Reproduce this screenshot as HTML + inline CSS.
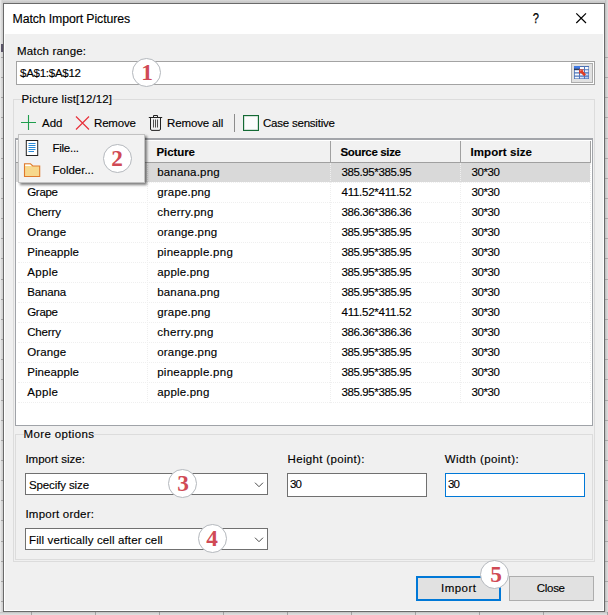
<!DOCTYPE html>
<html lang="en">
<head>
<meta charset="utf-8">
<title>Match Import Pictures</title>
<style>
html,body{margin:0;padding:0;}
body{width:608px;height:615px;position:relative;overflow:hidden;background:#e3e3e3;font-family:"Liberation Sans",sans-serif;font-size:12px;color:#000;}
.abs,.t{position:absolute;}
.t{white-space:pre;line-height:14px;height:14px;font-size:12px;color:#000;-webkit-text-stroke:0.14px #000;}
.lg{background:#f0f0f0;}
.z{z-index:6;}
.pz{z-index:5;}
#win{left:3px;top:3px;width:600px;height:607px;border:1px solid #6a6a6a;background:#f0f0f0;box-shadow:inset 0 0 0 1px #fff;}
#title{left:4px;top:4px;width:600px;height:30px;background:#fff;}
.box{background:#fff;border:1px solid #707070;box-sizing:border-box;}
.grp{border:1px solid #dcdcdc;box-sizing:border-box;}
.btn{background:#e1e1e1;border:1px solid #adadad;box-sizing:border-box;}
.circ{width:29px;height:29px;border-radius:50%;background:#fff;border:1px solid #b4b8bd;box-sizing:border-box;text-align:center;
 font-family:"Liberation Serif",serif;font-weight:bold;font-size:24px;line-height:26px;color:#d04a55;}
.circ span{display:inline-block;position:relative;transform:scale(.97,1);transform-origin:50% 78%;}
.hl{height:1px;border-top:1px dotted #efefef;box-sizing:border-box;}
.vl{width:1px;border-left:1px dotted #efefef;box-sizing:border-box;}
</style>
</head>
<body>
<div class="abs" style="left:0;top:0;width:608px;height:3px;background:linear-gradient(#dadada,#cdcdcd 50%,#c6c6c6);"></div>
<div class="abs" style="left:0;top:0;width:3px;height:615px;background:linear-gradient(90deg,#f0f0f0,#dcdcdc 40%,#cccccc);"></div>
<div class="abs" style="left:1px;top:56.8px;width:3px;height:560px;background:repeating-linear-gradient(180deg,rgba(120,120,120,.55) 0,rgba(120,120,120,.55) 1px,transparent 1px,transparent 20.15px);"></div>
<div class="abs" style="left:1px;top:44px;width:2px;height:8px;background:#5a5468;"></div>
<div class="abs" style="left:605px;top:0;width:3px;height:615px;background:linear-gradient(90deg,#bcbcbc,#d0d0d0 50%,#dedede);"></div>
<div class="abs" style="left:605px;top:56.8px;width:3px;height:560px;background:repeating-linear-gradient(180deg,rgba(120,120,120,.45) 0,rgba(120,120,120,.45) 1px,transparent 1px,transparent 20.15px);"></div>
<div class="abs" style="left:0;top:612px;width:608px;height:3px;background:linear-gradient(#c0c0c0,#d6d6d6 50%,#e2e2e2);"></div>
<div class="abs" style="left:31px;top:612px;width:577px;height:3px;background:repeating-linear-gradient(90deg,rgba(110,110,110,.5) 0,rgba(110,110,110,.5) 1px,transparent 1px,transparent 64px);"></div>
<div class="abs" id="win"></div>
<div class="abs" id="title"></div>

<!-- title buttons -->
<svg class="abs" style="left:570px;top:8px" width="24" height="20" viewBox="0 0 24 20"><path d="M6.3 5.3 L16 15 M16 5.3 L6.3 15" stroke="#000" stroke-width="1.2" fill="none"/></svg>
<span class="t" style="left:531.6px;top:11.2px;font-size:14px;-webkit-text-stroke:0.25px #000;transform:scaleX(.8);">?</span>

<!-- range input -->
<div class="abs box" style="left:16px;top:61px;width:579px;height:24px;border-color:#a3a3a3;"></div>
<div class="abs btn" style="left:571px;top:63px;width:22px;height:20px;"></div>
<svg class="abs" style="left:574px;top:66px" width="16" height="14" viewBox="0 0 16 14">
 <defs><linearGradient id="cg" x1="0" y1="0" x2="1" y2="1"><stop offset="0" stop-color="#ffffff"/><stop offset="0.55" stop-color="#f4f8ff"/><stop offset="1" stop-color="#9dbcf0"/></linearGradient></defs>
 <rect x="0" y="0" width="15" height="13" fill="#4c71b3"/>
 <rect x="0.8" y="1" width="13.6" height="11.4" fill="url(#cg)"/>
 <path d="M0 3.7 H15 M0 6.9 H15 M0 10.1 H15" stroke="#4f76ba" stroke-width="1.1" fill="none"/>
 <path d="M5.5 0 V13 M10.5 0 V13" stroke="#4f76ba" stroke-width="1" fill="none"/>
 <rect x="0" y="0" width="6" height="2.8" fill="#3f7ae6"/>
 <rect x="0" y="2.6" width="5.6" height="1.2" fill="#1a2948"/>
 <path d="M5.1 3.2 L10 3.4 L8.6 4.8 L12 8.2 L10.2 10.2 L6.7 6.8 L5.3 8.2 Z" fill="#e03c22"/>
 <path d="M6 4 L8 4 L6 5.8 Z" fill="#f0806a"/>
</svg>

<!-- group 1 -->
<div class="abs grp" style="left:13px;top:99px;width:582px;height:463px;"></div>

<!-- toolbar icons -->
<svg class="abs" style="left:20px;top:114px" width="18" height="18" viewBox="0 0 18 18"><path d="M1 8.5 H16 M8.5 1 V16" stroke="#1f9e4d" stroke-width="1.1" fill="none"/></svg>
<svg class="abs" style="left:74px;top:115px" width="18" height="18" viewBox="0 0 18 18"><path d="M2 1.5 L15 14.5 M15 1.5 L2 14.5" stroke="#e8323c" stroke-width="1.2" fill="none"/></svg>
<svg class="abs" style="left:147px;top:114px" width="17" height="18" viewBox="0 0 17 18">
 <path d="M6.5 3.5 V1.5 H10.5 V3.5" stroke="#222" stroke-width="1" fill="none"/>
 <path d="M1.8 3.5 H15.2" stroke="#222" stroke-width="1" fill="none"/>
 <path d="M3.5 3.5 V15 Q3.6 16.4 5 16.4 H12 Q13.4 16.4 13.5 15 V3.5" stroke="#222" stroke-width="1" fill="none"/>
 <path d="M6.5 5.5 V13.5 M8.5 5.5 V13.5 M10.5 5.5 V13.5" stroke="#333" stroke-width="0.85" fill="none"/>
</svg>
<div class="abs" style="left:234px;top:114px;width:1px;height:18px;background:#8c8c8c;"></div>
<div class="abs" style="left:243px;top:115px;width:16px;height:16px;box-sizing:border-box;border:1px solid #146a34;background:#fcfcfc;box-shadow:inset 0 0 0 0.5px rgba(20,106,52,.35);"></div>

<!-- table -->
<div class="abs" style="left:15px;top:138px;width:578px;height:288px;box-sizing:border-box;border:1px solid #a0a3a8;border-top:2px solid #a3a5aa;background:#fff;"></div>
<div class="abs" style="left:16px;top:141px;width:575px;height:22px;background:#f1f1f1;border-bottom:1px solid #a0a0a0;box-sizing:border-box;"></div>
<div class="abs" style="left:330px;top:141px;width:1px;height:22px;background:#a0a0a0;"></div>
<div class="abs" style="left:460px;top:141px;width:1px;height:22px;background:#a0a0a0;"></div>
<div class="abs" style="left:590px;top:141px;width:1px;height:22px;background:#a0a0a0;"></div>
<div class="abs" style="left:16px;top:163px;width:574px;height:19px;background:#d9d9d9;"></div>
<div class="abs hl" style="left:18px;top:182px;width:572px;"></div>
<div class="abs hl" style="left:18px;top:202px;width:572px;"></div>
<div class="abs hl" style="left:18px;top:222px;width:572px;"></div>
<div class="abs hl" style="left:18px;top:242px;width:572px;"></div>
<div class="abs hl" style="left:18px;top:262px;width:572px;"></div>
<div class="abs hl" style="left:18px;top:282px;width:572px;"></div>
<div class="abs hl" style="left:18px;top:302px;width:572px;"></div>
<div class="abs hl" style="left:18px;top:322px;width:572px;"></div>
<div class="abs hl" style="left:18px;top:342px;width:572px;"></div>
<div class="abs hl" style="left:18px;top:362px;width:572px;"></div>
<div class="abs hl" style="left:18px;top:382px;width:572px;"></div>
<div class="abs hl" style="left:18px;top:402px;width:572px;"></div>
<div class="abs vl" style="left:147px;top:163px;height:240px;"></div>
<div class="abs vl" style="left:330px;top:163px;height:240px;"></div>
<div class="abs vl" style="left:460px;top:163px;height:240px;"></div>
<div class="abs vl" style="left:590px;top:163px;height:240px;"></div>

<!-- popup -->
<div class="abs pz" style="left:18px;top:134px;width:126.5px;height:49px;box-sizing:border-box;background:#f2f2f2;border:1px solid #c2c2c2;box-shadow:2px 2px 2.5px rgba(0,0,0,.5);"></div>
<svg class="abs pz" style="left:25px;top:139px" width="16" height="18" viewBox="0 0 16 18">
 <rect x="1.3" y="1.5" width="11.4" height="15" fill="#fff" stroke="#222" stroke-width="1"/>
 <path d="M3.5 4.5 H10.5 M3.5 6.5 H10.5 M3.5 8.5 H10.5 M3.5 10.5 H10.5 M3.5 12.5 H9" stroke="#2b8ad6" stroke-width="1" fill="none"/>
</svg>
<svg class="abs pz" style="left:23px;top:162px" width="19" height="16" viewBox="0 0 19 16">
 <path d="M1.5 14.5 V1.9 H7.5 L9.8 4 H16.7 V14.5 Z" fill="#f7d88c" stroke="#e07a2c" stroke-width="1.1"/>
 <path d="M2.2 3.9 V2.6 H7.1 L8.6 3.9 Z" fill="#fff"/>
</svg>

<!-- group 2 -->
<div class="abs grp" style="left:15px;top:434px;width:578px;height:126px;"></div>
<div class="abs box" style="left:25px;top:473px;width:243px;height:22px;"></div>
<div class="abs box" style="left:25px;top:528px;width:243px;height:22px;"></div>
<svg class="abs" style="left:253px;top:479px" width="12" height="10" viewBox="0 0 12 10"><path d="M2 3.7 L6 7.7 L10 3.7" stroke="#404040" stroke-width="0.95" fill="none"/></svg>
<svg class="abs" style="left:253px;top:534px" width="12" height="10" viewBox="0 0 12 10"><path d="M2 3.7 L6 7.7 L10 3.7" stroke="#404040" stroke-width="0.95" fill="none"/></svg>
<div class="abs box" style="left:287px;top:473px;width:140px;height:24px;"></div>
<div class="abs box" style="left:445px;top:473px;width:140px;height:24px;border-color:#0078d7;"></div>

<!-- buttons -->
<div class="abs btn" style="left:416px;top:576px;width:85px;height:25px;border:2px solid #0078d7;"></div>
<div class="abs btn" style="left:509px;top:576px;width:85px;height:25px;"></div>

<span class="t" style="left:12.5px;top:12px;letter-spacing:-0.10px;font-size:12.3px;">Match Import Pictures</span>
<span class="t" style="left:17px;top:43.9px;letter-spacing:0.17px;font-size:11.5px;">Match range:</span>
<span class="t" style="left:20px;top:65.9px;letter-spacing:-0.26px;font-size:11.5px;">$A$1:$A$12</span>
<span class="t lg" style="left:21.5px;top:91.8px;letter-spacing:0.13px;font-size:11.5px;">Picture list[12/12]</span>
<span class="t" style="left:42px;top:115.9px;letter-spacing:0.02px;font-size:11.5px;">Add</span>
<span class="t" style="left:94px;top:115.9px;letter-spacing:-0.17px;font-size:11.5px;">Remove</span>
<span class="t" style="left:167px;top:115.9px;letter-spacing:-0.13px;font-size:11.5px;">Remove all</span>
<span class="t" style="left:263px;top:115.9px;letter-spacing:-0.22px;font-size:11.5px;">Case sensitive</span>
<span class="t z" style="left:52.5px;top:141.2px;letter-spacing:-0.27px;font-size:11.5px;">File...</span>
<span class="t z" style="left:52.5px;top:162.9px;letter-spacing:-0.01px;font-size:11.5px;">Folder...</span>
<span class="t" style="left:156.5px;top:145.2px;letter-spacing:-0.08px;font-weight:bold;font-size:11.5px;">Picture</span>
<span class="t" style="left:340.5px;top:145.2px;letter-spacing:-0.34px;font-weight:bold;font-size:11.5px;">Source size</span>
<span class="t" style="left:470.5px;top:145.2px;letter-spacing:0.08px;font-weight:bold;font-size:11.5px;">Import size</span>
<span class="t" style="left:27.2px;top:164.6px;letter-spacing:-0.13px;font-size:11.5px;">Banana</span>
<span class="t" style="left:157.2px;top:164.6px;letter-spacing:0.19px;font-size:11.5px;">banana.png</span>
<span class="t" style="left:341.5px;top:164.6px;letter-spacing:-0.39px;font-size:11.5px;">385.95*385.95</span>
<span class="t" style="left:471.4px;top:164.6px;letter-spacing:-0.37px;font-size:11.5px;">30*30</span>
<span class="t" style="left:27.2px;top:184.6px;letter-spacing:-0.29px;font-size:11.5px;">Grape</span>
<span class="t" style="left:157.2px;top:184.6px;letter-spacing:0.19px;font-size:11.5px;">grape.png</span>
<span class="t" style="left:341.5px;top:184.6px;letter-spacing:-0.25px;font-size:11.5px;">411.52*411.52</span>
<span class="t" style="left:471.4px;top:184.6px;letter-spacing:-0.37px;font-size:11.5px;">30*30</span>
<span class="t" style="left:27.2px;top:204.6px;letter-spacing:-0.16px;font-size:11.5px;">Cherry</span>
<span class="t" style="left:157.2px;top:204.6px;letter-spacing:0.31px;font-size:11.5px;">cherry.png</span>
<span class="t" style="left:341.5px;top:204.6px;letter-spacing:-0.39px;font-size:11.5px;">386.36*386.36</span>
<span class="t" style="left:471.4px;top:204.6px;letter-spacing:-0.37px;font-size:11.5px;">30*30</span>
<span class="t" style="left:27.2px;top:224.6px;letter-spacing:0.13px;font-size:11.5px;">Orange</span>
<span class="t" style="left:157.2px;top:224.6px;letter-spacing:0.20px;font-size:11.5px;">orange.png</span>
<span class="t" style="left:341.5px;top:224.6px;letter-spacing:-0.39px;font-size:11.5px;">385.95*385.95</span>
<span class="t" style="left:471.4px;top:224.6px;letter-spacing:-0.37px;font-size:11.5px;">30*30</span>
<span class="t" style="left:27.2px;top:244.6px;letter-spacing:0.08px;font-size:11.5px;">Pineapple</span>
<span class="t" style="left:157.2px;top:244.6px;letter-spacing:0.28px;font-size:11.5px;">pineapple.png</span>
<span class="t" style="left:341.5px;top:244.6px;letter-spacing:-0.39px;font-size:11.5px;">385.95*385.95</span>
<span class="t" style="left:471.4px;top:244.6px;letter-spacing:-0.37px;font-size:11.5px;">30*30</span>
<span class="t" style="left:27.2px;top:264.6px;letter-spacing:0.34px;font-size:11.5px;">Apple</span>
<span class="t" style="left:157.2px;top:264.6px;letter-spacing:0.20px;font-size:11.5px;">apple.png</span>
<span class="t" style="left:341.5px;top:264.6px;letter-spacing:-0.39px;font-size:11.5px;">385.95*385.95</span>
<span class="t" style="left:471.4px;top:264.6px;letter-spacing:-0.37px;font-size:11.5px;">30*30</span>
<span class="t" style="left:27.2px;top:284.6px;letter-spacing:-0.13px;font-size:11.5px;">Banana</span>
<span class="t" style="left:157.2px;top:284.6px;letter-spacing:0.19px;font-size:11.5px;">banana.png</span>
<span class="t" style="left:341.5px;top:284.6px;letter-spacing:-0.39px;font-size:11.5px;">385.95*385.95</span>
<span class="t" style="left:471.4px;top:284.6px;letter-spacing:-0.37px;font-size:11.5px;">30*30</span>
<span class="t" style="left:27.2px;top:304.6px;letter-spacing:-0.29px;font-size:11.5px;">Grape</span>
<span class="t" style="left:157.2px;top:304.6px;letter-spacing:0.19px;font-size:11.5px;">grape.png</span>
<span class="t" style="left:341.5px;top:304.6px;letter-spacing:-0.25px;font-size:11.5px;">411.52*411.52</span>
<span class="t" style="left:471.4px;top:304.6px;letter-spacing:-0.37px;font-size:11.5px;">30*30</span>
<span class="t" style="left:27.2px;top:324.6px;letter-spacing:-0.16px;font-size:11.5px;">Cherry</span>
<span class="t" style="left:157.2px;top:324.6px;letter-spacing:0.31px;font-size:11.5px;">cherry.png</span>
<span class="t" style="left:341.5px;top:324.6px;letter-spacing:-0.39px;font-size:11.5px;">386.36*386.36</span>
<span class="t" style="left:471.4px;top:324.6px;letter-spacing:-0.37px;font-size:11.5px;">30*30</span>
<span class="t" style="left:27.2px;top:344.6px;letter-spacing:0.13px;font-size:11.5px;">Orange</span>
<span class="t" style="left:157.2px;top:344.6px;letter-spacing:0.20px;font-size:11.5px;">orange.png</span>
<span class="t" style="left:341.5px;top:344.6px;letter-spacing:-0.39px;font-size:11.5px;">385.95*385.95</span>
<span class="t" style="left:471.4px;top:344.6px;letter-spacing:-0.37px;font-size:11.5px;">30*30</span>
<span class="t" style="left:27.2px;top:364.6px;letter-spacing:0.08px;font-size:11.5px;">Pineapple</span>
<span class="t" style="left:157.2px;top:364.6px;letter-spacing:0.28px;font-size:11.5px;">pineapple.png</span>
<span class="t" style="left:341.5px;top:364.6px;letter-spacing:-0.39px;font-size:11.5px;">385.95*385.95</span>
<span class="t" style="left:471.4px;top:364.6px;letter-spacing:-0.37px;font-size:11.5px;">30*30</span>
<span class="t" style="left:27.2px;top:384.6px;letter-spacing:0.34px;font-size:11.5px;">Apple</span>
<span class="t" style="left:157.2px;top:384.6px;letter-spacing:0.20px;font-size:11.5px;">apple.png</span>
<span class="t" style="left:341.5px;top:384.6px;letter-spacing:-0.39px;font-size:11.5px;">385.95*385.95</span>
<span class="t" style="left:471.4px;top:384.6px;letter-spacing:-0.37px;font-size:11.5px;">30*30</span>
<span class="t lg" style="left:23.5px;top:426.6px;letter-spacing:0.37px;font-size:11.5px;">More options</span>
<span class="t" style="left:25.4px;top:451.6px;letter-spacing:0.01px;font-size:11.5px;">Import size:</span>
<span class="t" style="left:287.5px;top:451.6px;letter-spacing:0.34px;font-size:11.5px;">Height (point):</span>
<span class="t" style="left:444.8px;top:451.6px;letter-spacing:0.42px;font-size:11.5px;">Width (point):</span>
<span class="t" style="left:29px;top:478.2px;letter-spacing:-0.12px;font-size:11.5px;">Specify size</span>
<span class="t" style="left:290px;top:476.9px;letter-spacing:-0.80px;font-size:11.5px;">30</span>
<span class="t" style="left:448px;top:476.9px;letter-spacing:-0.80px;font-size:11.5px;">30</span>
<span class="t" style="left:25.4px;top:506.6px;letter-spacing:0.23px;font-size:11.5px;">Import order:</span>
<span class="t" style="left:29px;top:533.4px;letter-spacing:0.13px;font-size:11.5px;">Fill vertically cell after cell</span>
<span class="t" style="left:441px;top:581.3px;letter-spacing:0.48px;font-size:11.5px;">Import</span>
<span class="t" style="left:536.8px;top:581.3px;letter-spacing:-0.30px;font-size:11.5px;">Close</span>

<!-- callouts -->
<div class="abs circ" style="left:132px;top:58px;"><span>1</span></div>
<div class="abs circ z" style="left:103px;top:144px;"><span style="left:-0.8px">2</span></div>
<div class="abs circ" style="left:168px;top:469px;"><span style="left:0.4px">3</span></div>
<div class="abs circ" style="left:198px;top:524px;"><span style="left:-0.3px">4</span></div>
<div class="abs circ" style="left:480px;top:560px;"><span style="left:1.7px">5</span></div>
</body>
</html>
